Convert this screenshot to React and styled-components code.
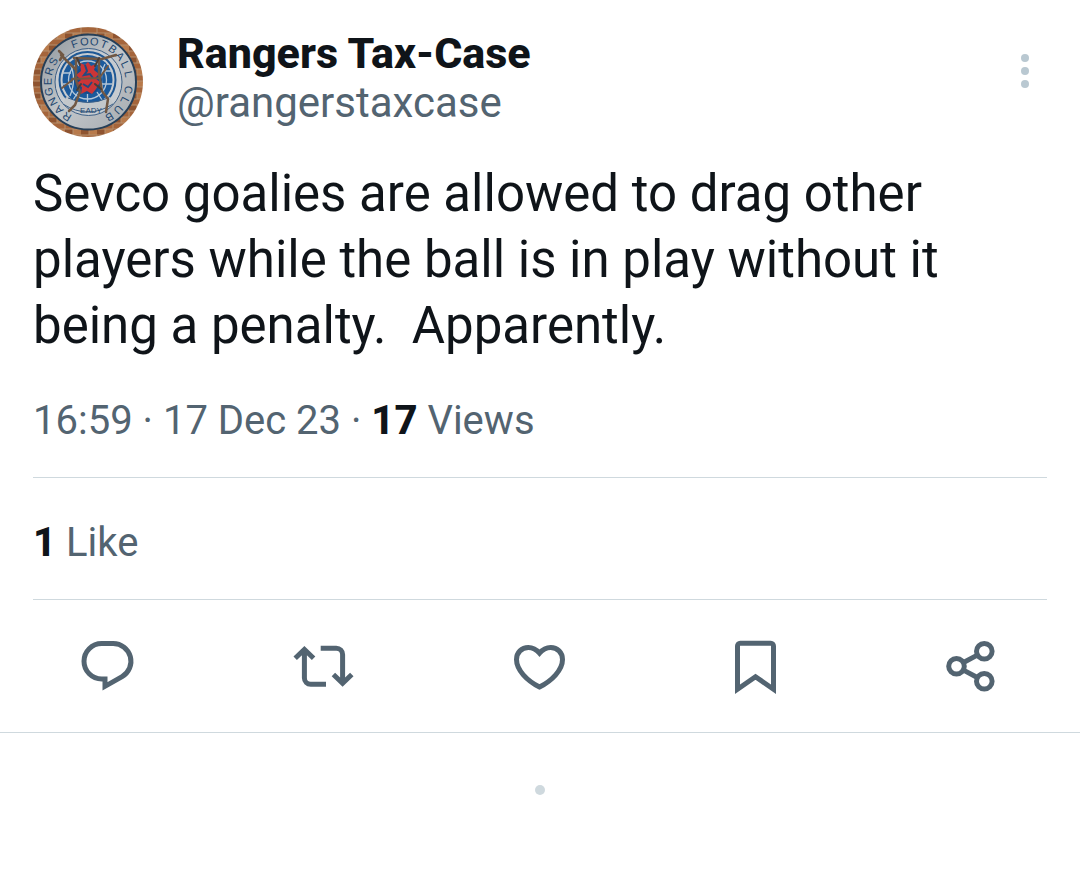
import React from "react";
import styled, { createGlobalStyle } from "styled-components";

const colors = {
  text: "#0f1419",
  muted: "#536471",
  line: "#cfd9de",
  faint: "#b9c8d1"
};

const GlobalStyle = createGlobalStyle`
  * {
    box-sizing: border-box;
  }
  body {
    margin: 0;
    background: #ffffff;
    color: ${colors.text};
    font-family: Roboto, "Liberation Sans", sans-serif;
  }
`;

const Page = styled.main`
  width: 100%;
`;

const Tweet = styled.article`
  padding-top: 27px;
  border-bottom: 1px solid ${colors.line};
`;

const Header = styled.header`
  display: flex;
  align-items: flex-start;
  padding: 0 33px;
`;

const Avatar = styled.svg`
  flex: none;
  width: 110px;
  height: 110px;
  border-radius: 50%;
`;

const Author = styled.div`
  flex: 1;
  display: flex;
  flex-direction: column;
  align-items: flex-start;
  margin-left: 34px;
`;

const Name = styled.a`
  color: ${colors.text};
  font-size: 43px;
  font-weight: 800;
  line-height: 52px;
  text-decoration: none;
`;

const Handle = styled.a`
  color: ${colors.muted};
  font-size: 42px;
  line-height: 48px;
  text-decoration: none;
`;

const MoreButton = styled.button`
  display: flex;
  align-items: center;
  justify-content: center;
  width: 44px;
  height: 88px;
  padding: 0;
  border: 0;
  background: none;
  color: ${colors.faint};
`;

const Body = styled.p`
  margin: 24px 33px 0;
  font-size: 51px;
  line-height: 66px;
  white-space: pre-wrap;
`;

const Line = styled.div`
  margin: 0 33px;
  padding: ${props => props.$top}px 0 30px;
  border-bottom: 1px solid ${colors.line};
  color: ${colors.muted};
  font-size: 40px;
  line-height: 52px;
`;

const Count = styled.strong`
  color: ${colors.text};
  font-weight: 800;
`;

const Actions = styled.div`
  display: grid;
  grid-template-columns: repeat(5, 1fr);
  height: 132px;
`;

const ActionButton = styled.button`
  display: flex;
  align-items: center;
  justify-content: center;
  padding: 0;
  border: 0;
  background: none;
  color: ${colors.muted};
`;

const ActionIcon = styled.svg`
  width: 64px;
  height: 64px;
  fill: none;
  stroke: currentColor;
  stroke-width: 5;
  stroke-miterlimit: 10;
`;

const Footer = styled.footer`
  display: flex;
  justify-content: center;
  padding: 52px 0;
`;

const Dot = styled.span`
  width: 10px;
  height: 10px;
  border-radius: 50%;
  background: ${colors.line};
`;

// angles run clockwise from the top of the crest
const crestWords = [
  { word: "RANGERS", from: 212, step: 14.7 },
  { word: "FOOTBALL", from: 340, step: 14.1 },
  { word: "CLUB", from: 101, step: 16 }
];

const Crest = () => (
  <Avatar viewBox="0 0 110 110" role="img" aria-label="Rangers Tax-Case">
    <defs>
      <pattern id="brick" width="16" height="12" patternUnits="userSpaceOnUse">
        <rect width="16" height="12" fill="#b58f6c" />
        <rect x="0.5" y="0.5" width="15" height="5" fill="#a5653b" />
        <rect x="-7.5" y="6.5" width="15" height="5" fill="#8f5430" />
        <rect x="8.5" y="6.5" width="15" height="5" fill="#b87a4b" />
      </pattern>
      <linearGradient id="silver" x1="0" y1="0" x2="1" y2="1">
        <stop offset="0" stopColor="#8f969b" />
        <stop offset="0.5" stopColor="#c3c7cb" />
        <stop offset="1" stopColor="#a4a9ae" />
      </linearGradient>
    </defs>
    <rect width="110" height="110" fill="url(#brick)" />
    <circle cx="55.5" cy="55" r="47.5" fill="url(#silver)" stroke="#263f58" strokeWidth="2" />
    <circle cx="55.5" cy="55" r="33.5" fill="#c6cbd0" stroke="#3c5f86" strokeWidth="1" />
    <circle cx="54.5" cy="53" r="28" fill="#c6cbd0" stroke="#1d5794" strokeWidth="2" />
    <circle cx="54.5" cy="53" r="25" fill="#1b5a9c" />
    <g fill="none" stroke="#b4c6d8" strokeWidth="1.3">
      <circle cx="54.5" cy="53" r="19" />
      <path d="M30 46h8M30 57h9M70 44h8M69 57h10M42 31l4 8M66 31l-4 8M40 73l5-8M69 73l-5-8M54.5 66v11" />
      <path d="M37 37c5 10 4 22 0 32M72 37c-5 10-4 22 0 32" />
    </g>
    <circle cx="55" cy="53" r="14" fill="#174c8b" />
    <path
      d="M47 36l5 2 3-3 3 4 5-2-2 6 5 4-4 4 5 4-4 7-4 5-5-3-6 3 1-7-6-3 5-4-5-5 5-4z"
      fill="#cb3537"
    />
    <path d="M52 38l2 6-3 4 6-1 3 4M50 57l5 3 4-5" fill="none" stroke="#23497f" strokeWidth="2" />
    <path d="M30 77q25 16 50 0l-3-7q-22 11-44 0z" fill="#c2c7cb" />
    <path d="M30 77q25 16 50 0M35 71q20 9 40 0" fill="none" stroke="#3c5f86" strokeWidth="1" />
    <g fill="#1d466f" fontFamily="Liberation Sans, sans-serif" fontSize="11" textAnchor="middle">
      {crestWords.map(({ word, from, step }) =>
        word.split("").map((letter, i) => (
          <text key={word + i} x="55.5" y="18" transform={`rotate(${from + i * step} 55.5 55)`}>
            {letter}
          </text>
        ))
      )}
      <text x="58" y="86" fontSize="8">
        EADY
      </text>
    </g>
    <g fill="none" stroke="#715844" strokeWidth="2.5" strokeLinecap="round">
      <path d="M26 24l4 4-3 5M28 28l15 15M41 31l28 1 14-4M43 32v21l4 12-5 13-6 6M66 33v14l3 17 6 8-2 13" />
      <path d="M39 52l28-1M29 61l14-11M67 50l8-11" strokeWidth="2" />
      <path d="M44 31l3 7M66 31l-4 8M44 63l4-6M68 62l-6-5" stroke="#493e38" strokeWidth="2" />
    </g>
  </Avatar>
);

const actions = [
  {
    label: "Reply",
    icon: (
      <path d="M-3 13H-6.25A17.75 17.75 0 0 1-6.25-22.5H5.25A17.75 17.75 0 0 1 14.1 10.6L-3 20.3z" />
    )
  },
  {
    label: "Repost",
    icon: (
      <>
        <path d="M-28.8-7.8l9.2-8.7 9.2 8.7M-19.6-16V12a6.3 6.3 0 0 0 6.3 6.3H2" />
        <path d="M9.4 8.5l9.2 8.7 9.2-8.7M18.6 16.5v-28a6.3 6.3 0 0 0-6.3-6.3H-3.3" />
      </>
    )
  },
  {
    label: "Like",
    icon: (
      <path d="M-.5-12.8C-4-17-8-18.5-11.7-18.5-18.3-18.5-23.5-13.5-23.5-6.5-23.5 4-13 14.6-.5 21 12 14.6 22.5 4 22.5-6.5 22.5-13.5 17.3-18.5 10.7-18.5 7-18.5 3-17-.5-12.8z" />
    )
  },
  {
    label: "Bookmark",
    icon: <path d="M-18.5 23.3V-20a2.7 2.7 0 0 1 2.7-2.7H14.8A2.7 2.7 0 0 1 17.5-20V23.3L-.5 10.7z" />
  },
  {
    label: "Share",
    icon: (
      <>
        <circle cx="-15.5" cy=".3" r="7.8" />
        <circle cx="12.3" cy="-14.7" r="7.8" />
        <circle cx="12.3" cy="15.3" r="7.8" />
        <path d="M-8.5-3.5l13.8-7.4M-8.5 4.1l13.8 7.4" />
      </>
    )
  }
];

export default function App() {
  return (
    <Page>
      <GlobalStyle />
      <Tweet>
        <Header>
          <Crest />
          <Author>
            <Name href="#profile">Rangers Tax-Case</Name>
            <Handle href="#profile">@rangerstaxcase</Handle>
          </Author>
          <MoreButton aria-label="More">
            <svg width="10" height="34" viewBox="0 0 10 34" fill="currentColor">
              <circle cx="5" cy="4" r="4" />
              <circle cx="5" cy="17" r="4" />
              <circle cx="5" cy="30" r="4" />
            </svg>
          </MoreButton>
        </Header>
        <Body>
          {"Sevco goalies are allowed to drag other players while the ball is in play without it being a penalty.  Apparently."}
        </Body>
        <Line $top={36}>
          16:59 · 17 Dec 23 · <Count>17</Count> Views
        </Line>
        <Line $top={39}>
          <Count>1</Count> Like
        </Line>
        <Actions>
          {actions.map(({ label, icon }) => (
            <ActionButton key={label} aria-label={label}>
              <ActionIcon viewBox="-32 -32 64 64">{icon}</ActionIcon>
            </ActionButton>
          ))}
        </Actions>
      </Tweet>
      <Footer>
        <Dot />
      </Footer>
    </Page>
  );
}
